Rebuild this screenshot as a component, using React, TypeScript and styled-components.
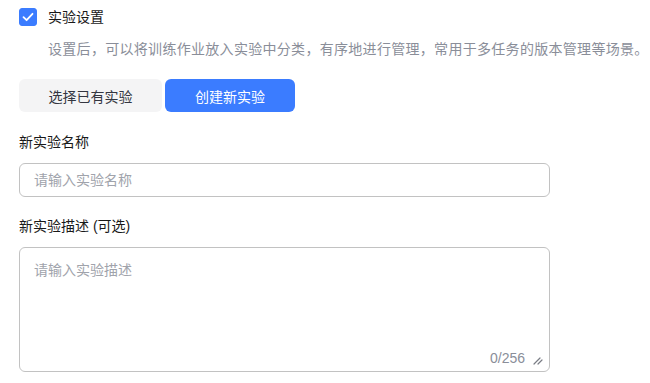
import { useState } from "react";
import styled, { createGlobalStyle } from "styled-components";

const GlobalStyle = createGlobalStyle`
  html, body {
    margin: 0;
    padding: 0;
    background: #ffffff;
  }
  body {
    font-family: "Liberation Sans", "Noto Sans CJK SC", sans-serif;
    font-size: 14px;
    color: #252b3a;
  }
  * { box-sizing: border-box; }
`;

const Page = styled.div`
  display: flex;
  flex-direction: column;
  padding: 7px 0 0 19px;
`;

const CheckRow = styled.label`
  display: flex;
  align-items: center;
  gap: 11px;
  height: 20px;
  cursor: pointer;
`;

const Box = styled.span<{ $on: boolean }>`
  width: 18px;
  height: 18px;
  border-radius: 3px;
  background: ${(p) => (p.$on ? "#3b7cff" : "#fff")};
  border: 1px solid ${(p) => (p.$on ? "#3b7cff" : "#adb0b8")};
  display: flex;
  align-items: center;
  justify-content: center;
`;

const CheckText = styled.span`
  font-size: 14px;
  color: #191919;
  line-height: 20px;
`;

const Desc = styled.div`
  margin: 12px 0 0 29px;
  font-size: 14px;
  line-height: 20px;
  letter-spacing: 0.3px;
  color: #8a8e99;
  white-space: nowrap;
`;

const Tabs = styled.div`
  display: flex;
  gap: 3px;
  margin-top: 20px;
`;

const Tab = styled.button<{ $active: boolean }>`
  height: 33px;
  padding: 0 ${(p) => (p.$active ? 30 : 29.5)}px;
  border: none;
  border-radius: 6px;
  font-family: inherit;
  font-size: 14px;
  cursor: pointer;
  background: ${(p) => (p.$active ? "#3b7cff" : "#f4f4f5")};
  color: ${(p) => (p.$active ? "#ffffff" : "#333640")};
`;

const Field = styled.div<{ $top: number }>`
  display: flex;
  flex-direction: column;
  margin-top: ${(p) => p.$top}px;
  width: 531px;
`;

const Label = styled.div`
  font-size: 14px;
  line-height: 20px;
  color: #191919;
  margin-bottom: 11px;
`;

const Input = styled.input`
  height: 34px;
  width: 100%;
  padding: 0 14px;
  border: 1px solid #c2c2c2;
  border-radius: 6px;
  font-family: inherit;
  font-size: 14px;
  color: #252b3a;
  outline: none;
  &::placeholder { color: #a0a3ab; }
`;

const AreaWrap = styled.div`
  position: relative;
  height: 125px;
  border: 1px solid #c2c2c2;
  border-radius: 6px;
`;

const Area = styled.textarea`
  width: 100%;
  height: 100%;
  border: none;
  background: transparent;
  padding: 12px 14px;
  font-family: inherit;
  font-size: 14px;
  line-height: 20px;
  color: #252b3a;
  resize: none;
  outline: none;
  &::placeholder { color: #a0a3ab; }
`;

const Counter = styled.div`
  position: absolute;
  right: 24px;
  bottom: 5px;
  display: flex;
  align-items: center;
  font-size: 14px;
  color: #8a8e99;
  line-height: 16px;
`;

const Grip = styled.svg`
  position: absolute;
  right: 6px;
  bottom: 6px;
`;

export default function App() {
  const [on, setOn] = useState(true);
  const [mode, setMode] = useState(1);
  const [desc, setDesc] = useState("");

  return (
    <Page>
      <GlobalStyle />
      <CheckRow onClick={() => setOn(!on)}>
        <Box $on={on}>
          {on && (
            <svg width="12" height="10" viewBox="0 0 12 10">
              <path d="M1.5 5.2 L4.6 8.2 L10.5 1.8" fill="none" stroke="#fff" strokeWidth="1.8" strokeLinecap="round" strokeLinejoin="round" />
            </svg>
          )}
        </Box>
        <CheckText>实验设置</CheckText>
      </CheckRow>
      <Desc>设置后，可以将训练作业放入实验中分类，有序地进行管理，常用于多任务的版本管理等场景。</Desc>
      <Tabs>
        <Tab $active={mode === 0} onClick={() => setMode(0)}>选择已有实验</Tab>
        <Tab $active={mode === 1} onClick={() => setMode(1)}>创建新实验</Tab>
      </Tabs>
      <Field $top={20}>
        <Label>新实验名称</Label>
        <Input placeholder="请输入实验名称" />
      </Field>
      <Field $top={19}>
        <Label>新实验描述 (可选)</Label>
        <AreaWrap>
          <Area placeholder="请输入实验描述" maxLength={256} value={desc} onChange={(e) => setDesc(e.target.value)} />
          <Counter>{desc.length}/256</Counter>
          <Grip width="10" height="8" viewBox="0 0 10 8">
            <path d="M1 7 L7 1 M5 7 L9 3" stroke="#7a7d85" strokeWidth="1.2" strokeLinecap="round" />
          </Grip>
        </AreaWrap>
      </Field>
    </Page>
  );
}
